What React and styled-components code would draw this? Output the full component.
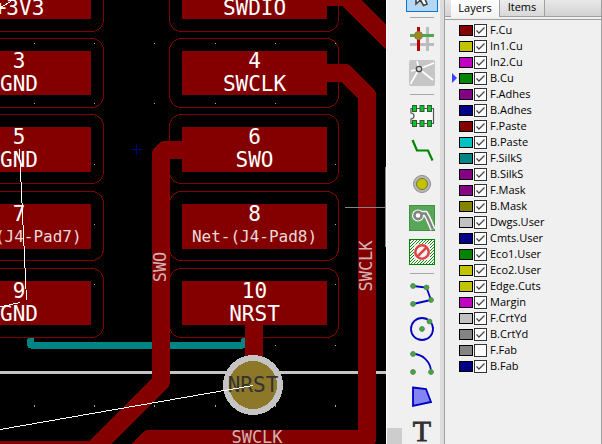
import React, { useState } from "react";
import styled, { createGlobalStyle } from "styled-components";

const GlobalStyle = createGlobalStyle`
  * { box-sizing: border-box; }
  body { margin: 0; background: #f0f0f0; overflow: hidden; }
`;

const Editor = styled.main`
  display: flex;
  height: 100vh;
  overflow: hidden;
  font: 11px/16px "Open Sans", "Noto Sans", sans-serif;
  color: #000;
`;

const BoardPane = styled.section`
  flex: 1;
  min-width: 0;
  background: #000;
  overflow: hidden;
`;

const Board = styled.svg`
  display: block;
  width: 100%;
  height: 100%;
  font-family: "DejaVu Sans Mono", monospace;
`;

const NetText = styled.text`
  font-size: ${(p) => p.$size}px;
  fill: ${(p) => p.$color || "#fff"};
  text-anchor: middle;
`;

const ScrollTrack = styled.div`
  display: flex;
  flex-direction: column;
  justify-content: flex-end;
  flex: none;
  width: 16px;
  border-left: 1px solid #fff;
  background: #f0f0f0;
`;

const ScrollThumb = styled.div`
  height: 16px;
  background: #cdcdcd;
`;

const Toolbar = styled.nav`
  flex: none;
  display: flex;
  flex-direction: column;
  width: 38px;
  padding-left: 3px;
  margin-top: -21px;
  background: #f0f0f0;
`;

const ToolButton = styled.button`
  flex: none;
  display: flex;
  align-items: center;
  justify-content: center;
  width: 32px;
  height: 32px;
  margin: 1px;
  padding: 0;
  border: 1px solid ${(p) => (p.$active ? "#0078d7" : "transparent")};
  background: ${(p) => (p.$active ? "#b5d7f3" : "transparent")};
`;

const ToolIcon = styled.svg`
  display: block;
  flex: none;
  width: 26px;
  height: 26px;
`;

const Separator = styled.hr`
  flex: none;
  width: 24px;
  height: 1px;
  margin: 4px 5px;
  border: 0;
  background: #a8a8a8;
`;

const LayerPanel = styled.aside`
  flex: none;
  display: flex;
  flex-direction: column;
  width: 162px;
  border-left: 4px solid #dcdcdc;
`;

const PanelFrame = styled.div`
  flex: 1;
  border: solid #a0a0a0;
  border-width: 0 1px;
`;

const TabStrip = styled.div`
  display: flex;
  height: 17px;
  padding-left: 6px;
  border-bottom: 1px solid #a0a0a0;
  background: linear-gradient(#e8e8e8, #d2d2d2);
`;

const Tab = styled.button`
  height: ${(p) => (p.$active ? 17 : 16)}px;
  width: ${(p) => (p.$active ? 49 : 45)}px;
  padding: 0 0 2px;
  border: solid #a0a0a0;
  border-width: 0 1px 0 0;
  background: ${(p) =>
    p.$active ? "linear-gradient(#fff, #f4f4f4)" : "linear-gradient(#ececec, #d8d8d8)"};
  font: inherit;
  line-height: 14px;
  color: #000;
`;

const LayerList = styled.ul`
  margin: 2px 0 0;
  padding: 2px 0 0 6px;
  border-top: 1px solid #a0a0a0;
  list-style: none;
`;

const LayerRow = styled.li`
  display: flex;
  align-items: center;
  height: 16px;
`;

const Marker = styled.svg`
  flex: none;
  width: 6px;
  height: 10px;
  margin-right: 2px;
`;

const Swatch = styled.button`
  flex: none;
  width: 14px;
  height: 11px;
  margin-right: 1px;
  padding: 0;
  border: 1px solid #000;
  background: ${(p) => p.$color};
`;

const LayerLabel = styled.label`
  display: flex;
  align-items: center;
  gap: 3px;
  white-space: nowrap;
`;

const CheckBox = styled.input`
  appearance: none;
  flex: none;
  width: 13px;
  height: 13px;
  margin: 0;
  border: 1px solid #333;
  background: #fff;
  &:checked {
    background: #fff
      url("data:image/svg+xml,%3Csvg xmlns='http://www.w3.org/2000/svg' viewBox='0 0 11 11'%3E%3Cpath d='M1.5 5.5L4 8L9.5 2.5' fill='none' stroke='%23444' stroke-width='1.3'/%3E%3C/svg%3E");
  }
`;

const RED = "#840000";

const LEFT = { from: -53, to: 91, mid: 19 };
const RIGHT = { from: 182, to: 327, mid: 254.5 };

const PADS = [
  { side: LEFT, top: -25, net: "+3V3" },
  { side: RIGHT, top: -25, net: "SWDIO" },
  { side: LEFT, top: 51, name: "3", net: "GND" },
  { side: RIGHT, top: 51, name: "4", net: "SWCLK" },
  { side: LEFT, top: 127, name: "5", net: "GND" },
  { side: RIGHT, top: 127, name: "6", net: "SWO" },
  { side: LEFT, top: 204, name: "7", net: "Net-(J4-Pad7)", small: true },
  { side: RIGHT, top: 204, name: "8", net: "Net-(J4-Pad8)", small: true },
  { side: LEFT, top: 281, name: "9", net: "GND" },
  { side: RIGHT, top: 281, name: "10", net: "NRST" },
];

const TRACES = [
  "M327 -3H346L396 47",
  "M327 73H345L367 95V439H149L120 468",
  "M182 150H165L161 154V382L93 450H-10",
  "M254 320V370",
];

const GRID_X = [34, 94, 154, 215, 275, 335];
const GRID_Y = [43, 103, 164, 224, 284, 345, 405];

function BoardView() {
  return (
    <Board role="img" aria-label="Board layout">
      <g shapeRendering="crispEdges">
        <g fill="#a8a8a8">
          {GRID_Y.flatMap((y) =>
            GRID_X.map((x) => (
              <rect key={`${x}-${y}`} x={x} y={y} width="1" height={y === 405 ? 2 : 1} />
            ))
          )}
        </g>
        <rect x="0" y="371" width="100%" height="3" fill="#c4c4c4" />
        <path d="M31 345H243" fill="none" stroke="#008484" strokeWidth="7" strokeLinecap="round" />
        <rect x="27" y="338" width="7" height="8" rx="2" fill="#008484" />
        <rect x="241" y="338" width="7" height="8" rx="2" fill="#008484" />
        {PADS.map((p) => (
          <g key={p.net + p.top + p.side.mid}>
            <rect x={p.side.from - 12.5} y={p.top - 12.5} width="169" height="69" rx="12" fill="none" stroke={RED} />
            <rect x={p.side.from} y={p.top} width={p.side.to - p.side.from} height={p.top > 100 && p.top < 250 ? 45 : 44} fill={RED} />
          </g>
        ))}
        {TRACES.map((d) => (
          <path key={d} d={d} fill="none" stroke={RED} strokeWidth="18" strokeLinejoin="round" />
        ))}
        <circle cx="253" cy="385" r="30" fill="#c4c4c4" />
        <circle cx="253" cy="385" r="24" fill="#8c7828" />
      </g>
      {PADS.map((p) => (
        <g key={p.net + p.top + p.side.mid}>
          {p.name && (
            <NetText $size={21} x={p.side.mid} y={p.top + 17}>{p.name}</NetText>
          )}
          <NetText $size={p.small ? 16 : 21} $color={p.small ? "#ecd8d8" : "#fff"} x={p.side.mid} y={p.top + (p.small ? 38 : 40)}>
            {p.net}
          </NetText>
        </g>
      ))}
      <NetText $size={21} $color="#333" x="253" y="392">NRST</NetText>
      <NetText $size={17} $color="#d0b4b4" x="257" y="443">SWCLK</NetText>
      <NetText $size={17} $color="#d0b4b4" transform="translate(166 267) rotate(-90)">SWO</NetText>
      <NetText $size={17} $color="#d0b4b4" transform="translate(372 266) rotate(-90)">SWCLK</NetText>
      <g shapeRendering="crispEdges" fill="none" stroke="#fff">
        <path d="M0 429.5L253 385.5M19.5 149L26.5 300M0 307L20 302.5M0 8L13 0" />
        <path d="M345 207.5H386M385.5 167V247" stroke="#848484" />
        <path d="M131 149.5H142M136.5 144V155" stroke="#000084" />
      </g>
    </Board>
  );
}

const Node = (props) => <circle r="2.4" fill="#2db52d" stroke="#6e7a6e" strokeWidth="1" {...props} />;

const TOOLS = [
  {
    name: "Select",
    active: true,
    icon: <path d="M7 1V21L11.500 17L14.500 22.500L18 21L15.500 15H21Z" fill="#fff" stroke="#444" strokeWidth="1.6" />,
  },
  "sep",
  {
    name: "Highlight net",
    icon: (
      <>
        <path d="M18.500 1V25M1 18.500H25" stroke="#bcbcbc" strokeWidth="3" />
        <path d="M1 9.500H25" stroke="#4fa84f" strokeWidth="3" />
        <path d="M9.500 1V25" stroke="#b90000" strokeWidth="3" />
        <circle cx="9.500" cy="9.500" r="4" fill="#9c8b20" stroke="#857b48" />
      </>
    ),
  },
  {
    name: "Local ratsnest",
    icon: (
      <>
        <rect width="26" height="26" rx="2" fill="#c6c6c6" />
        <path d="M10 9L25 3M10 9L24 20M10 9L1.500 24M10 9L2 11M10 9L8 1" stroke="#fff" strokeWidth="1.6" />
        <circle cx="10" cy="9" r="2.700" fill="#d8d8d8" stroke="#484848" strokeWidth="1.3" />
      </>
    ),
  },
  "sep",
  {
    name: "Add footprint",
    icon: (
      <>
        <path d="M2 5.500H24.500V20.500H2V16A3 3 0 0 0 2 10Z" fill="#f8f8f8" stroke="#555" strokeWidth="1.2" />
        <g fill="#00c82c" stroke="#355935">
          {[3.5, 11, 18.5].map((x) => (
            <React.Fragment key={x}>
              <rect x={x} y="2.500" width="4" height="6" />
              <rect x={x} y="17.500" width="4" height="6" />
            </React.Fragment>
          ))}
        </g>
      </>
    ),
  },
  {
    name: "Route track",
    icon: <path d="M3.500 3L8 13.500H19L23.500 23.500" fill="none" stroke="#008400" strokeWidth="2.2" />,
  },
  {
    name: "Add via",
    icon: (
      <>
        <circle cx="13" cy="13" r="8.500" fill="#b8b8b8" stroke="#8c8c8c" />
        <circle cx="13" cy="13" r="5.500" fill="#c2c200" stroke="#74742c" />
      </>
    ),
  },
  {
    name: "Add filled zone",
    icon: (
      <>
        <rect x="0.500" y="0.500" width="25" height="25" fill="#59a659" stroke="#3c943c" />
        <path d="M9 8.500H16.500L19 13L24 24.500" fill="none" stroke="#fff" strokeWidth="5.500" />
        <circle cx="9" cy="10.500" r="6" fill="#fff" />
        <path d="M12 8.500H16.500L19 13L24 24.500" fill="none" stroke="#848484" strokeWidth="2.600" />
        <circle cx="9" cy="10.500" r="3.600" fill="#fff" stroke="#848484" strokeWidth="2.600" />
      </>
    ),
  },
  {
    name: "Add keepout area",
    icon: (
      <>
        <defs>
          <pattern id="hatch" width="3" height="3" patternUnits="userSpaceOnUse">
            <path d="M-1 1L1 -1M0 3L3 0M2 4L4 2" stroke="#108a10" strokeWidth="1" />
          </pattern>
        </defs>
        <rect x="0.500" y="0.500" width="25" height="25" fill="#fff" />
        <rect x="0.500" y="0.500" width="25" height="25" fill="url(#hatch)" stroke="#008400" />
        <rect x="5" y="5" width="16" height="16" rx="3" fill="#f4f4f4" />
        <circle cx="13" cy="13" r="6.700" fill="none" stroke="#de4646" strokeWidth="2.500" />
        <path d="M8.500 17.500L17.500 8.500" stroke="#de4646" strokeWidth="2.500" />
      </>
    ),
  },
  "sep",
  {
    name: "Draw line",
    icon: (
      <>
        <path d="M4 4L17.500 5.500L22 18L4 22" fill="none" stroke="#0000c2" strokeWidth="1.800" />
        <Node cx="4" cy="4" /><Node cx="17.500" cy="5.500" /><Node cx="22" cy="18" /><Node cx="4" cy="22" />
      </>
    ),
  },
  {
    name: "Draw circle",
    icon: (
      <>
        <circle cx="13" cy="13" r="11" fill="none" stroke="#0000c2" strokeWidth="1.800" />
        <Node cx="13" cy="13" /><Node cx="20.500" cy="5.500" />
      </>
    ),
  },
  {
    name: "Draw arc",
    icon: (
      <>
        <path d="M4 4A18 18 0 0 1 22 22" fill="none" stroke="#0000c2" strokeWidth="1.800" />
        <Node cx="4" cy="4" /><Node cx="22" cy="22" /><Node cx="4" cy="22" />
      </>
    ),
  },
  {
    name: "Draw polygon",
    icon: <path d="M4 3.500L17 5L22 18L4 22Z" fill="#8484f4" stroke="#0000c2" strokeWidth="1.800" />,
  },
  {
    name: "Add text",
    icon: (
      <text x="13" y="23" textAnchor="middle" fontFamily="Liberation Serif, serif" fontSize="30" fill="#303030" stroke="#303030" strokeWidth="0.8">
        T
      </text>
    ),
  },
];

const LAYERS = [
  ["F.Cu", "#840000"],
  ["In1.Cu", "#c2c200"],
  ["In2.Cu", "#c200c2"],
  ["B.Cu", "#008400"],
  ["F.Adhes", "#840084"],
  ["B.Adhes", "#000084"],
  ["F.Paste", "#840000"],
  ["B.Paste", "#00c2c2"],
  ["F.SilkS", "#008484"],
  ["B.SilkS", "#840084"],
  ["F.Mask", "#840084"],
  ["B.Mask", "#848400"],
  ["Dwgs.User", "#c2c2c2"],
  ["Cmts.User", "#000084"],
  ["Eco1.User", "#008400"],
  ["Eco2.User", "#c2c200"],
  ["Edge.Cuts", "#c2c200"],
  ["Margin", "#c200c2"],
  ["F.CrtYd", "#c2c2c2"],
  ["B.CrtYd", "#848484"],
  ["F.Fab", "#848484"],
  ["B.Fab", "#000084"],
];

export default function App() {
  const [current, setCurrent] = useState("B.Cu");
  return (
    <>
      <GlobalStyle />
      <Editor>
        <BoardPane>
          <BoardView />
        </BoardPane>
        <ScrollTrack>
          <ScrollThumb />
        </ScrollTrack>
        <Toolbar aria-label="Tools">
          {TOOLS.map((t, i) =>
            t === "sep" ? (
              <Separator key={i} />
            ) : (
              <ToolButton key={t.name} type="button" aria-label={t.name} $active={t.active}>
                <ToolIcon viewBox="0 0 26 26">{t.icon}</ToolIcon>
              </ToolButton>
            )
          )}
        </Toolbar>
        <LayerPanel>
          <PanelFrame>
            <TabStrip role="tablist">
              <Tab type="button" role="tab" aria-selected="true" $active>Layers</Tab>
              <Tab type="button" role="tab" aria-selected="false">Items</Tab>
            </TabStrip>
            <LayerList>
              {LAYERS.map(([name, color]) => (
                <LayerRow key={name}>
                  <Marker viewBox="0 0 6 10" aria-hidden="true">
                    {name === current && <path d="M1 0L6 5L1 10Z" fill="#4040ff" />}
                  </Marker>
                  <Swatch type="button" aria-label={`Select ${name}`} $color={color} onClick={() => setCurrent(name)} />
                  <LayerLabel>
                    <CheckBox type="checkbox" defaultChecked={name !== "F.Fab"} />
                    {name}
                  </LayerLabel>
                </LayerRow>
              ))}
            </LayerList>
          </PanelFrame>
        </LayerPanel>
      </Editor>
    </>
  );
}
